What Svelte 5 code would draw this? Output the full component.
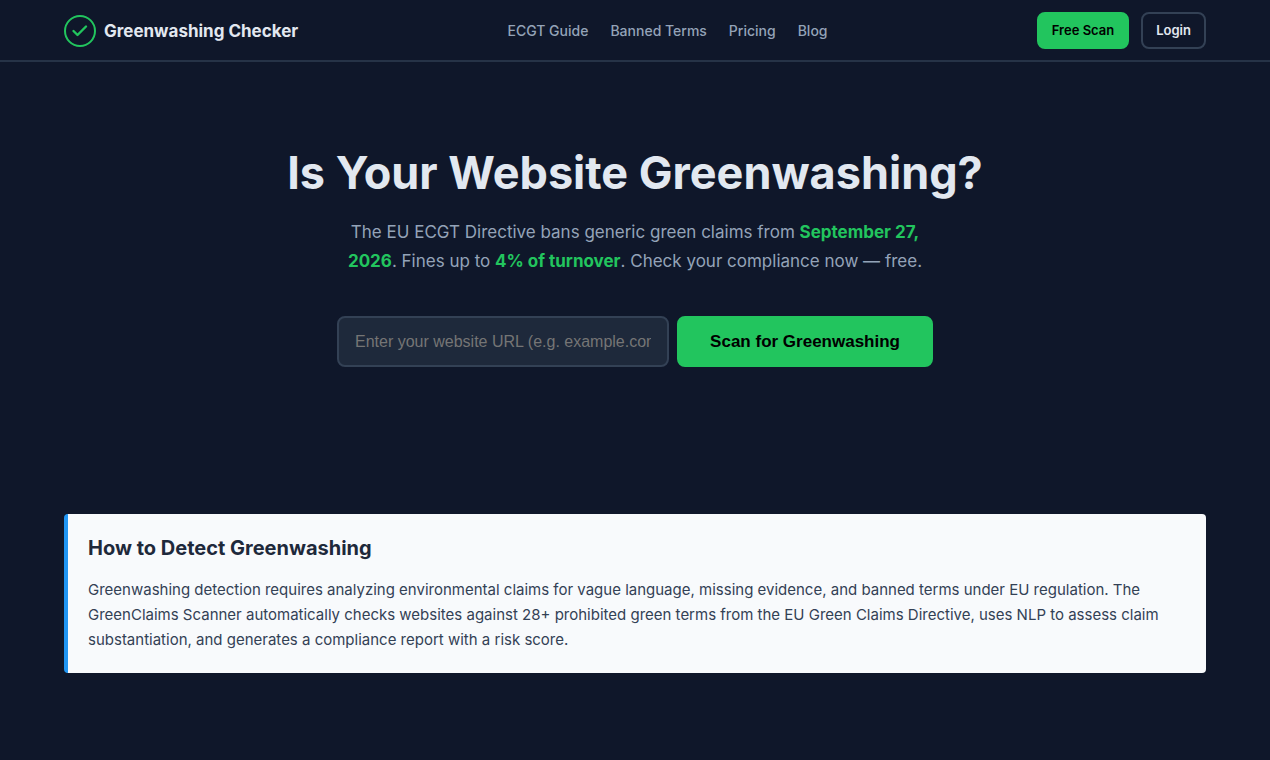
<script lang="ts">
    const links = [
        { label: "ECGT Guide", href: "#ecgt-guide" },
        { label: "Banned Terms", href: "#banned-terms" },
        { label: "Pricing", href: "#pricing" },
        { label: "Blog", href: "#blog" },
    ];

    let url = $state("");

    function scan(e: SubmitEvent) {
        e.preventDefault();
    }
</script>

<div class="page">
    <header>
        <a class="logo" href="#home">
            <svg width="32" height="32" viewBox="0 0 32 32" fill="none" aria-hidden="true">
                <circle cx="16" cy="16" r="15" stroke="#22c55e" stroke-width="2" />
                <path
                    d="M9.5 16l4 4L22 11.5"
                    stroke="#22c55e"
                    stroke-width="2.4"
                    stroke-linecap="round"
                    stroke-linejoin="round"
                />
            </svg>
            Greenwashing Checker
        </a>

        <nav aria-label="Main">
            {#each links as link}
                <a href={link.href}>{link.label}</a>
            {/each}
        </nav>

        <div class="actions">
            <a class="btn primary" href="#scan">Free Scan</a>
            <a class="btn outline" href="#login">Login</a>
        </div>
    </header>

    <main>
        <section class="hero">
            <h1>Is Your Website Greenwashing?</h1>
            <p>
                The EU ECGT Directive bans generic green claims from
                <strong>September 27, 2026</strong>. Fines up to
                <strong>4% of turnover</strong>. Check your compliance now — free.
            </p>

            <form id="scan" onsubmit={scan}>
                <input
                    type="text"
                    bind:value={url}
                    aria-label="Website URL"
                    placeholder="Enter your website URL (e.g. example.com)"
                />
                <button type="submit">Scan for Greenwashing</button>
            </form>
        </section>

        <section class="answer">
            <h2>How to Detect Greenwashing</h2>
            <p>
                Greenwashing detection requires analyzing environmental claims for vague language,
                missing evidence, and banned terms under EU regulation. The GreenClaims Scanner
                automatically checks websites against 28+ prohibited green terms from the EU Green
                Claims Directive, uses NLP to assess claim substantiation, and generates a
                compliance report with a risk score.
            </p>
        </section>
    </main>
</div>

<style>
    :global(body) {
        background: #0f172a;
    }

    .page {
        font-family: Inter, sans-serif;
        font-size: 15px;
        color: #e2e8f0;
    }

    header {
        display: flex;
        justify-content: space-between;
        align-items: center;
        padding: 12px 64px 11px;
        border-bottom: 2px solid #263347;
    }

    a {
        color: inherit;
        text-decoration: none;
    }

    .logo {
        display: flex;
        align-items: center;
        gap: 8px;
        font-size: 17px;
        font-weight: 700;
    }

    nav {
        display: flex;
        gap: 22px;
        font-size: 14px;
        font-weight: 500;
        color: #94a3b8;
    }

    .actions {
        display: flex;
        gap: 12px;
    }

    .btn {
        padding: 8px 13px;
        border: 2px solid #334155;
        border-radius: 8px;
        font-size: 13px;
        line-height: 17px;
        font-weight: 600;
    }

    .btn.primary {
        background: #22c55e;
        border-color: #22c55e;
        color: #000;
    }

    .hero {
        display: flex;
        flex-direction: column;
        align-items: center;
        padding: 80px 64px 83px;
        text-align: center;
    }

    h1 {
        margin: 0 0 14px;
        font-size: 45px;
        line-height: 62px;
        font-weight: 700;
    }

    .hero p {
        max-width: 596px;
        margin: 0 0 40px;
        font-size: 17px;
        line-height: 29px;
        color: #94a3b8;
    }

    strong {
        font-weight: 700;
        color: #22c55e;
    }

    form {
        display: flex;
        gap: 8px;
        width: 100%;
        max-width: 596px;
    }

    input,
    button {
        font-family: "Liberation Sans", Arial, sans-serif;
        font-size: 16px;
        line-height: 19px;
        border-radius: 8px;
    }

    input {
        flex: 1;
        min-width: 0;
        padding: 14px 16px;
        border: 2px solid #334155;
        background: #1e293b;
        color: #e2e8f0;
    }

    input::placeholder {
        color: #757575;
    }

    button {
        padding: 14px 31px;
        border: 2px solid #22c55e;
        background: #22c55e;
        color: #000;
        font-size: 17px;
        font-weight: 700;
        cursor: pointer;
    }

    .answer {
        margin: 64px;
        padding: 20px 20px 21px;
        border-left: 4px solid #2196f3;
        border-radius: 4px;
        background: #f8fafc;
    }

    .answer h2 {
        margin: 0 0 15px;
        font-size: 20px;
        line-height: 28px;
        font-weight: 700;
        color: #1e293b;
    }

    .answer p {
        margin: 0;
        line-height: 25px;
        color: #334155;
    }
</style>
